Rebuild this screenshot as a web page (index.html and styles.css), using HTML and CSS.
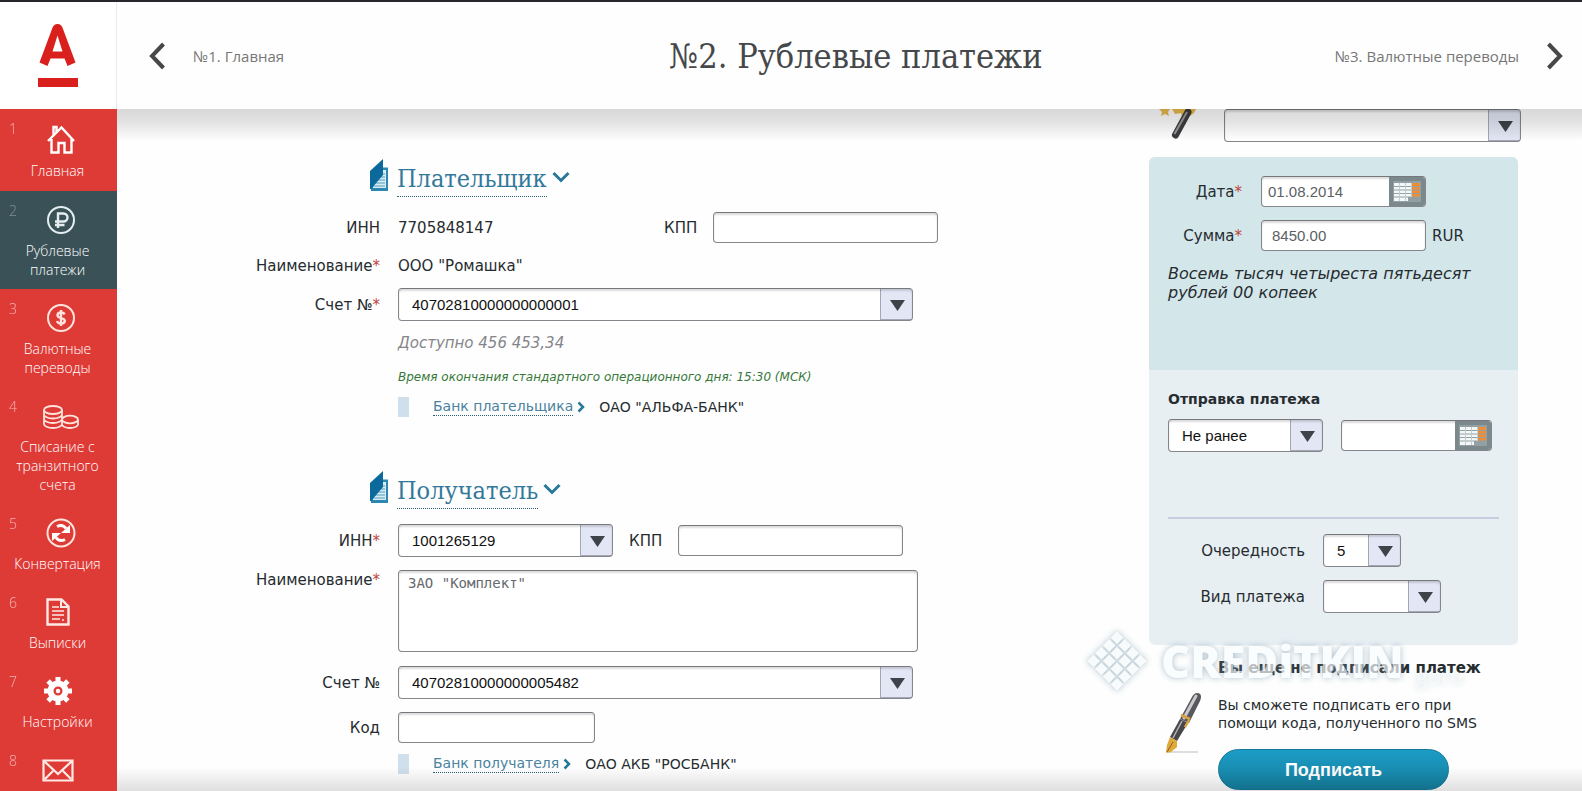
FILE: index.html
```html
<!DOCTYPE html>
<html lang="ru">
<head>
<meta charset="utf-8">
<title>Рублевые платежи</title>
<meta name="viewport" content="width=device-width, initial-scale=1">
<link rel="stylesheet" href="styles.css">
</head>
<body>
<div class="app">
  <aside class="side">
    <a class="logo" href="#" aria-label="Альфа-Банк">
      <svg width="42" height="64" viewBox="0 0 42 64"><path fill="#d9201d" fill-rule="evenodd" d="M15 5Q16.500 0 20.500 0T26 5L38.500 38.500 30.500 42 27.500 34.500H13.500L10.500 42 2.500 38.500zM20.500 11.500 15.500 27.500h10z"/><path d="M1 54h40v9H1z" fill="#d9201d"/></svg>
    </a>
    <nav class="nav">
      <a class="nav-item nav-first" href="#"><span class="num">1</span>
        <svg class="ico" width="30" height="30" viewBox="0 0 30 30"><path d="M2 16 15.500 2.500 28 16M5.500 14V27.500h7V18h6v9.500h7V14M7.500 10.500V2h3v6" fill="none" stroke="#fff" stroke-width="2.400"/></svg>
        <span>Главная</span></a>
      <a class="nav-item active" href="#"><span class="num">2</span>
        <svg class="ico" width="30" height="30" viewBox="0 0 30 30"><circle cx="15" cy="15" r="13" fill="none" stroke="#e4eef0" stroke-width="2"/><path d="M12 23V8.500h5.500a4 4 0 0 1 0 8H9M9 20h9.500" fill="none" stroke="#e4eef0" stroke-width="2.400"/></svg>
        <span>Рублевые платежи</span></a>
      <a class="nav-item" href="#"><span class="num">3</span>
        <svg class="ico" width="30" height="30" viewBox="0 0 30 30"><circle cx="15" cy="15" r="13" fill="none" stroke="#ffe3dc" stroke-width="2"/><path d="M18.500 11.500C18 10 16.500 9.500 15 9.500c-2 0-3.500 1-3.500 2.700 0 3.800 7.300 1.900 7.300 5.600 0 1.800-1.700 2.700-3.800 2.700-2 0-3.500-.8-4-2.500M15 7v16" fill="none" stroke="#ffe3dc" stroke-width="2.400"/></svg>
        <span>Валютные переводы</span></a>
      <a class="nav-item" href="#"><span class="num">4</span>
        <svg class="ico" width="36" height="30" viewBox="0 0 36 30"><g fill="none" stroke="#ffe3dc" stroke-width="1.800"><ellipse cx="10" cy="9" rx="9" ry="4"/><path d="M1 9v14c0 2 4 4 9 4s9-2 9-4M1 13.500c0 2 4 4 9 4s9-2 9-4M1 18c0 2 4 4 9 4s9-2 9-4M19 9v9"/><ellipse cx="27" cy="18.500" rx="8" ry="3.800"/><path d="M19 18.500v5c0 2 4 3.500 8 3.500s8-1.500 8-3.500v-5"/></g></svg>
        <span>Списание с транзитного счета</span></a>
      <a class="nav-item" href="#"><span class="num">5</span>
        <svg class="ico" width="30" height="30" viewBox="0 0 30 30"><circle cx="15" cy="15" r="13.500" fill="none" stroke="#ffe3dc" stroke-width="2"/><path d="M11 8.500c4-2 7-1 9 2M19 21.500c-4 2-7 1-9-2" fill="none" stroke="#fff" stroke-width="3"/><path d="M24 7v8h-9zM6 23v-8h9z" fill="#fff"/></svg>
        <span>Конвертация</span></a>
      <a class="nav-item" href="#"><span class="num">6</span>
        <svg class="ico ico-left" width="24" height="30" viewBox="0 0 24 30"><path d="M1.500 2.500h14l7 7v18h-21z" fill="none" stroke="#ffe9e4" stroke-width="2.400"/><path d="M15 2v8h8" fill="none" stroke="#ffe9e4" stroke-width="2"/><path d="M6 10h7M6 14h12M6 18h12M6 22h8M16 23h2" stroke="#ffe9e4" stroke-width="1.600"/></svg>
        <span>Выписки</span></a>
      <a class="nav-item" href="#"><span class="num">7</span>
        <svg class="ico ico-left" width="30" height="30" viewBox="0 0 30 30"><circle cx="15" cy="15" r="7.500" fill="none" stroke="#fff" stroke-width="6"/><circle cx="15" cy="15" r="2.200" fill="#fff"/><path d="M15 1v5M15 24v5M1 15h5M24 15h5M5.100 5.100l3.500 3.500M21.400 21.400l3.500 3.500M5.100 24.900l3.500-3.500M21.400 8.600l3.500-3.500" stroke="#fff" stroke-width="5"/></svg>
        <span>Настройки</span></a>
      <a class="nav-item" href="#" aria-label="Письма"><span class="num">8</span>
        <svg class="ico ico-left" width="32" height="30" viewBox="0 0 32 30"><path d="M1.500 5.500h29v20h-29zM2 6l14 13L30 6M3 24l8-8M29 24l-8-8" fill="none" stroke="#ffe9e4" stroke-width="2.200"/></svg>
      </a>
    </nav>
  </aside>

  <div class="page">
    <header class="head">
      <a class="head-link" href="#"><svg width="18" height="28" viewBox="0 0 18 28"><path d="M15.500 2 4 14l11.500 12" fill="none" stroke="#474747" stroke-width="4"/></svg><span>№1. Главная</span></a>
      <h1 class="title">№2. Рублевые платежи</h1>
      <a class="head-link head-next" href="#"><span>№3. Валютные переводы</span><svg width="18" height="28" viewBox="0 0 18 28"><path d="M2.500 2 14 14 2.500 26" fill="none" stroke="#474747" stroke-width="4"/></svg></a>
    </header>

    <main class="main">
      <form class="form">
        <h2 class="sect"><svg class="book" width="20" height="34" viewBox="0 0 20 34"><path d="M8 9.500h11V33H2V15z" fill="#2e87b0"/><path d="M5 12h12v18H4z" fill="#d8ecf4"/><path d="M6 16h10M6 19h10M6 22h10M5 25h11M4 28h12" stroke="#4f9dc0"/><path d="M1 13 14 1v16L2 31H1z" fill="#0b6a9b"/></svg><button type="button" class="sect-btn"><span>Плательщик</span><svg width="18" height="12" viewBox="0 0 18 12"><path d="M1.500 2 9 9.500 16.500 2" fill="none" stroke="#28789a" stroke-width="3"/></svg></button></h2>
        <div class="row"><span class="lbl">ИНН</span><div class="fld"><span class="w-inn">7705848147</span><label for="kpp1">КПП</label><input id="kpp1" class="inp w-kpp" type="text"></div></div>
        <div class="row r-text"><span class="lbl">Наименование<i class="req">*</i></span><div class="fld">ООО "Ромашка"</div></div>
        <div class="row"><label class="lbl" for="acc1">Счет №<i class="req">*</i></label><div class="fld"><select id="acc1" class="sel w-acc"><option>40702810000000000001</option></select></div></div>
        <div class="row r-avail"><div class="fld avail">Доступно 456 453,34</div></div>
        <div class="row r-time"><div class="fld time">Время окончания стандартного операционного дня: 15:30 (МСК)</div></div>
        <div class="row r-bank"><div class="fld bank"><i class="mark"></i><a href="#" class="bank-link">Банк плательщика</a><svg width="8" height="12" viewBox="0 0 8 12"><path d="M1.500 1.500 6 6 1.500 10.500" fill="none" stroke="#28789a" stroke-width="2.500"/></svg><span class="bank-name">ОАО "АЛЬФА-БАНК"</span></div></div>

        <h2 class="sect sect-2"><svg class="book" width="20" height="34" viewBox="0 0 20 34"><path d="M8 9.500h11V33H2V15z" fill="#2e87b0"/><path d="M5 12h12v18H4z" fill="#d8ecf4"/><path d="M6 16h10M6 19h10M6 22h10M5 25h11M4 28h12" stroke="#4f9dc0"/><path d="M1 13 14 1v16L2 31H1z" fill="#0b6a9b"/></svg><button type="button" class="sect-btn"><span>Получатель</span><svg width="18" height="12" viewBox="0 0 18 12"><path d="M1.500 2 9 9.500 16.500 2" fill="none" stroke="#28789a" stroke-width="3"/></svg></button></h2>
        <div class="row r-inn2"><label class="lbl" for="inn2">ИНН<i class="req">*</i></label><div class="fld fld-gap"><select id="inn2" class="sel w-inn2"><option>1001265129</option></select><label for="kpp2">КПП</label><input id="kpp2" class="inp w-kpp" type="text"></div></div>
        <div class="row r-area"><label class="lbl" for="name2">Наименование<i class="req">*</i></label><div class="fld"><textarea id="name2" class="area">ЗАО "Комплект"</textarea></div></div>
        <div class="row r-acc2"><label class="lbl" for="acc2">Счет №</label><div class="fld"><select id="acc2" class="sel w-acc"><option>40702810000000005482</option></select></div></div>
        <div class="row r-code"><label class="lbl" for="code">Код</label><div class="fld"><input id="code" class="inp w-code" type="text"></div></div>
        <div class="row r-bank"><div class="fld bank"><i class="mark"></i><a href="#" class="bank-link">Банк получателя</a><svg width="8" height="12" viewBox="0 0 8 12"><path d="M1.500 1.500 6 6 1.500 10.500" fill="none" stroke="#28789a" stroke-width="2.500"/></svg><span class="bank-name">ОАО АКБ "РОСБАНК"</span></div></div>
      </form>

      <section class="right">
        <div class="template">
          <svg width="42" height="34" viewBox="0 0 42 34"><path d="M2 0h11l-2 3 1 4-4-2-4 2 1-4zM15 0h24l-2 4-4 3-3-2-5 3-1-4-6 1z" fill="#e9b94b"/><path d="M31 3 18.500 26" stroke="#3c3c3e" stroke-width="7" stroke-linecap="round"/><path d="M30 3 17.500 25" stroke="#98989c" stroke-width="2"/></svg>
          <select class="sel w-tpl" aria-label="Шаблон"><option></option></select>
        </div>
        <div class="panel">
          <div class="sum">
            <div class="prow"><label class="plbl" for="date">Дата<i class="req">*</i></label><span class="date w-date"><input id="date" type="text" value="01.08.2014"><button type="button" class="cal" aria-label="Календарь"><svg width="28" height="21" viewBox="0 0 28 21"><path d="M0 0h28v21H0z" fill="#93a0a3"/><path d="M1 2h18v14H1zM1 16h14v4H1z" fill="#f4f8f8"/><path d="M19 2h8v14h-8z" fill="#ec8f38"/><path d="M0 5.500h27M0 9h27M0 12.500h27M0 16h27" stroke="#93a0a3"/><path d="M6.500 2v18M12.500 2v18M18.500 2v14" stroke="#c3cccd"/></svg></button></span></div>
            <div class="prow"><label class="plbl" for="sum">Сумма<i class="req">*</i></label><input id="sum" class="inp w-date sum-inp" type="text" value="8450.00"><span class="cur">RUR</span></div>
            <p class="words">Восемь тысяч четыреста пятьдесят рублей 00 копеек</p>
          </div>
          <div class="send">
            <h3 class="send-title">Отправка платежа</h3>
            <div class="send-row"><select class="sel w-when" aria-label="Срок"><option>Не ранее</option></select><span class="date w-day"><input type="text" aria-label="Дата отправки"><button type="button" class="cal" aria-label="Календарь"><svg width="28" height="21" viewBox="0 0 28 21"><path d="M0 0h28v21H0z" fill="#93a0a3"/><path d="M1 2h18v14H1zM1 16h14v4H1z" fill="#f4f8f8"/><path d="M19 2h8v14h-8z" fill="#ec8f38"/><path d="M0 5.500h27M0 9h27M0 12.500h27M0 16h27" stroke="#93a0a3"/><path d="M6.500 2v18M12.500 2v18M18.500 2v14" stroke="#c3cccd"/></svg></button></span></div>
            <hr class="line">
            <div class="orow"><label class="olbl" for="order">Очередность</label><select id="order" class="sel w-order"><option>5</option></select></div>
            <div class="orow"><label class="olbl" for="kind">Вид платежа</label><select id="kind" class="sel w-kind"><option></option></select></div>
          </div>
        </div>
        <div class="sign">
          <svg class="pen" width="42" height="62" viewBox="0 0 42 62"><path d="M4 60h30" stroke="#ddd" stroke-width="2"/><path d="M33 1c4 0 5 3 3 8L25 31l-9-4L28 5c1-2 3-4 5-4z" fill="#58585d"/><path d="M32 4 20 26" stroke="#c9c9ce" stroke-width="3" stroke-linecap="round"/><path d="m16 27 8 4-11 18-7-4z" fill="#47474c"/><path d="M18 29 9 46" stroke="#b4b4b8" stroke-width="1.500"/><path d="m17 23 9 4M25 28l-4 7" stroke="#d8a240" stroke-width="2.500"/><path d="m6 45 7 4v6l-6 5-5 1 1-8z" fill="#e0a93c"/><path d="m3 60 6-10" stroke="#8a5f18"/></svg>
          <div class="sign-body">
            <h3 class="sign-title">Вы еще не подписали платеж</h3>
            <p class="sign-text">Вы сможете подписать его при помощи кода, полученного по SMS</p>
            <button type="button" class="sign-btn">Подписать</button>
          </div>
          <div class="wm">
            <svg width="64" height="62" viewBox="0 0 64 62"><g transform="translate(32 31) rotate(45)" fill="#f6fafc"><path d="M-21-21h9v9h-9zM-10-21h9v9h-9zM1-21h9v9H1zM12-21h9v9h-9zM-21-10h9v9h-9zM-10-10h9v9h-9zM1-10h9v9H1zM12-10h9v9h-9zM-21 1h9v9h-9zM-10 1h9v9h-9zM1 1h9v9H1zM12 1h9v9h-9zM-21 12h9v9h-9zM-10 12h9v9h-9zM1 12h9v9H1zM12 12h9v9h-9z"/></g></svg>
            <span class="wm-text">CREDiTKIN</span><span class="wm-tail">guru</span>
          </div>
        </div>
      </section>
    </main>
  </div>
</div>
</body>
</html>
```
FILE: styles.css
```css
* { box-sizing: border-box; }
body {
  margin: 0;
  font: 15px/20px "DejaVu Sans", Verdana, sans-serif;
  color: #262c30;
  background: #fdfefd;
}
h1, h2, h3, p { margin: 0; font-weight: normal; }
a { color: inherit; text-decoration: none; }
svg { display: block; flex: none; }
input, select, textarea, button { font: inherit; color: inherit; margin: 0; }
button { border: 0; padding: 0; background: none; cursor: pointer; }

.app {
  display: grid;
  grid-template-columns: 117px minmax(0, 1fr);
  height: 100vh;
  overflow: hidden;
  border-top: 2px solid #26262b;
}

/* sidebar */
.side { background: #de3b37; overflow: hidden; }
.logo {
  display: flex;
  justify-content: center;
  height: 107px;
  padding-top: 22px;
  background: #fff;
  border-right: 1px solid #e8eaec;
}
.nav-item {
  position: relative;
  display: flex;
  flex-direction: column;
  align-items: center;
  gap: 6px;
  padding: 14px 12px 10px 10px;
  font: 300 14px/19px "Open Sans", "Noto Sans", sans-serif;
  color: #fff;
  text-align: center;
}
.nav-first { padding-top: 16px; padding-bottom: 11px; }
.nav-item.active { background: #3a5257; }
.ico { margin-left: 6px; }
.ico-left { margin-left: 0; }
.num {
  position: absolute;
  left: 9px;
  top: 10px;
  opacity: .6;
}
.active .num { opacity: .35; }

/* header */
.page { position: relative; display: flex; flex-direction: column; min-width: 0; overflow: hidden; }
.head {
  position: relative;
  z-index: 2;
  flex: none;
  display: grid;
  grid-template-columns: 1fr auto 1fr;
  align-items: center;
  height: 107px;
  padding: 0 18px 0 31px;
  background: #fdfefd;
}
.head-link {
  display: flex;
  align-items: center;
  gap: 27px;
  font: 15px/20px "Open Sans", "Noto Sans", sans-serif;
  color: #777;
}
.head-next { justify-content: flex-end; }
.title {
  font: 34px/44px "DejaVu Serif Condensed", "DejaVu Serif", serif;
  color: #45484a;
}

.main {
  position: relative;
  flex: 1;
  display: flex;
  justify-content: space-between;
  align-items: flex-start;
  min-height: 0;
  padding-right: 61px;
}
.main::before, .page::after {
  content: "";
  position: absolute;
  left: 0;
  right: 0;
  z-index: 1;
  pointer-events: none;
}
.main::before { top: 0; height: 32px; background: linear-gradient(rgba(0,0,0,.15), rgba(0,0,0,.11) 40%, rgba(0,0,0,0)); }
.page::after { bottom: 0; height: 24px; background: linear-gradient(rgba(0,0,0,0), rgba(0,0,0,.12)); }

/* form */
.form { width: 820px; padding-top: 47px; }
.sect { display: flex; align-items: flex-start; padding-left: 252px; height: 55px; }
.sect-2 { margin-top: 44px; height: 56px; }
.book { margin-top: 2px; }
.sect-btn {
  display: flex;
  align-items: flex-start;
  gap: 5px;
  margin-left: 8px;
  padding-top: 6px;
  font: 25px/34px "DejaVu Serif Condensed", "DejaVu Serif", serif;
  color: #33789a;
}
.sect-btn span { border-bottom: 1px dotted #2b5f78; }
.sect-btn svg { margin-top: 9px; }
.row { display: grid; grid-template-columns: 263px 1fr; column-gap: 18px; align-items: center; min-height: 33px; }
.lbl { text-align: right; }
.fld { grid-column: 2; display: flex; align-items: center; }
.req { color: #c0443c; font-style: normal; }
.w-inn { width: 266px; }
.fld label { margin-right: 16px; }
.fld-gap { gap: 16px; }
.fld-gap label { margin-right: 0; }
.r-text { min-height: 44px; }
.r-avail { min-height: 43px; }
.r-time { min-height: 26px; }
.r-bank { min-height: 34px; }
.avail { font-style: italic; color: #85858a; }
.time { font-size: 12px; font-style: italic; color: #37783a; }
.bank { font-size: 14px; }
.mark { width: 11px; height: 20px; margin-right: 24px; background: #cfdfec; }
.bank-link { color: #4a83a0; border-bottom: 1px dotted #2b5f78; line-height: 17px; margin-right: 4px; }
.bank-name { margin-left: 14px; }
.r-area { align-items: start; margin-top: 13px; }
.r-acc2 { margin-top: 14px; }
.r-code { margin: 12px 0 3px; }

.inp, .sel, .area, .date {
  border: 1px solid #85858c;
  border-top-color: #77777e;
  border-radius: 4px;
  background-color: #fff;
  box-shadow: inset 0 2px 2px rgba(0,0,0,.14);
}
.inp { height: 31px; padding: 0 10px; }
.sel {
  appearance: none;
  height: 33px;
  padding: 0 36px 0 13px;
  font: 15px/20px "Liberation Sans", Arial, sans-serif;
  color: #111;
  background-repeat: no-repeat;
  background-position: right top;
  background-image: url("data:image/svg+xml,%3Csvg xmlns='http://www.w3.org/2000/svg' width='32' height='31'%3E%3Cpath d='M0 0h32v31H0z' fill='%23e3e7f5'/%3E%3Cpath d='M.5 0v30M0 30.500h32' stroke='%23a4a8b4'/%3E%3Cpath d='M10 11h15l-7.500 11z' fill='%233f4248'/%3E%3C/svg%3E");
}
.area {
  display: block;
  width: 520px;
  height: 82px;
  padding: 2px 9px;
  font: 14px/20px "DejaVu Sans Mono", monospace;
  color: #66696d;
  resize: none;
}
.w-acc { width: 515px; }
.w-kpp { width: 225px; }
.w-inn2 { width: 215px; }
.w-code { width: 197px; }

/* right column */
.right { flex: none; width: 372px; }
.template { display: flex; justify-content: space-between; padding-left: 8px; }
.w-tpl { width: 297px; }
.panel { width: 369px; margin-top: 14px; border-radius: 6px; overflow: hidden; background: #e8eff3; }
.sum { height: 213px; padding: 19px 19px 0; background: #d3e6e9; }
.prow { display: flex; align-items: center; margin-bottom: 13px; }
.plbl { width: 74px; margin-right: 19px; text-align: right; }
.w-date { width: 165px; }
.sum-inp, .date { font: 15px/20px "Liberation Sans", Arial, sans-serif; color: #5c5f63; }
.date { display: flex; height: 31px; overflow: hidden; }
.date input { flex: 1; min-width: 0; border: 0; padding: 0 6px; background: none; }
.cal { display: grid; place-items: center; width: 36px; background: #7b898c; }
.cur { margin-left: 6px; }
.words { font-size: 16px; line-height: 19px; font-style: italic; }
.send { padding: 19px 19px 32px; }
.send-title, .sign-title { font-weight: bold; }
.send-title { font-size: 15px; }
.sign-title { font-size: 14px; }
.send-row { display: flex; align-items: center; gap: 18px; margin-top: 10px; }
.w-when { width: 155px; }
.w-day { width: 151px; }
.line { height: 2px; margin: 65px 0 15px; border: 0; background: #c9cde0; }
.orow { display: flex; align-items: center; margin-bottom: 13px; }
.orow:last-child { margin-bottom: 0; }
.olbl { width: 137px; margin-right: 18px; text-align: right; }
.w-order { width: 78px; }
.w-kind { width: 118px; }

.sign { position: relative; display: flex; gap: 12px; padding: 13px 0 0 15px; }
.pen { margin-top: 34px; }
.send-title { font-size: 14px; }
.sign-title { font-size: 15px; }
.sign-text { max-width: 285px; margin-top: 18px; font-size: 14px; line-height: 18px; }
.sign-btn {
  width: 231px;
  height: 41px;
  margin-top: 17px;
  border: 1px solid #12789b;
  border-radius: 21px;
  background: linear-gradient(#1c9cc6, #15809f);
  font: bold 18px/24px "Liberation Sans", Arial, sans-serif;
  color: #fff;
}
.wm {
  position: absolute;
  left: -64px;
  top: -15px;
  display: flex;
  align-items: center;
  gap: 12px;
  opacity: .7;
  pointer-events: none;
  color: #fafdff;
  filter: drop-shadow(0 0 3px #8aa5b6);
}
.wm-text { font: 800 45px/62px "Open Sans", sans-serif; }
.wm-tail { align-self: flex-end; font: 22px/34px "Open Sans", sans-serif; opacity: .5; }
```
